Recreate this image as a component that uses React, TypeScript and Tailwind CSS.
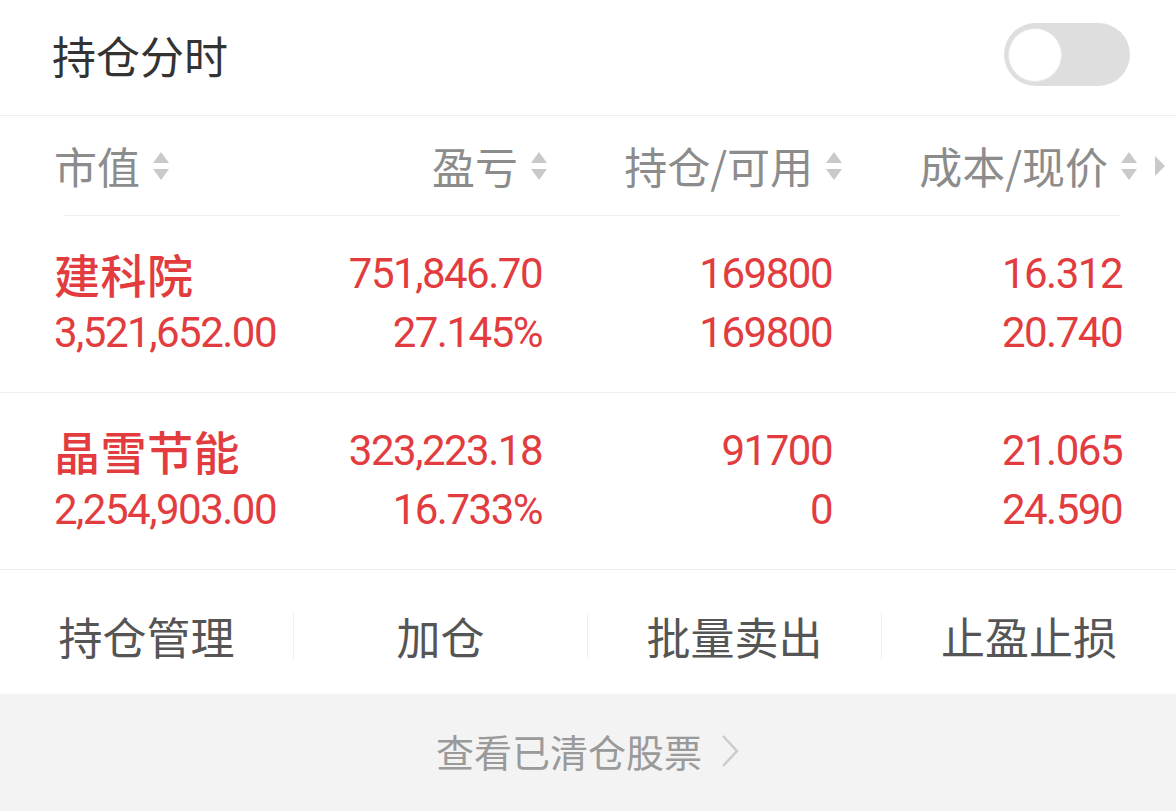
import React from 'react';

const cjk = { fontFamily: '"Noto Sans CJK SC", "Noto Sans", sans-serif' };
const num = { fontFamily: 'Roboto, "Noto Sans CJK SC", sans-serif' };

type Row = {
  name: string;
  value: string;
  pnl: string;
  pct: string;
  hold: string;
  avail: string;
  cost: string;
  price: string;
};

const rows: Row[] = [
  { name: '建科院', value: '3,521,652.00', pnl: '751,846.70', pct: '27.145%', hold: '169800', avail: '169800', cost: '16.312', price: '20.740' },
  { name: '晶雪节能', value: '2,254,903.00', pnl: '323,223.18', pct: '16.733%', hold: '91700', avail: '0', cost: '21.065', price: '24.590' },
];

function SortArrows() {
  return (
    <svg width="18" height="32" viewBox="0 0 18 32" className="ml-[12px] shrink-0">
      <path d="M9 2 L17 13 L1 13 Z" fill="#c9c9c9" />
      <path d="M1 19 L17 19 L9 30 Z" fill="#c9c9c9" />
    </svg>
  );
}

export default function App() {
  return (
    <div className="w-[1176px] h-[811px] bg-white overflow-hidden flex flex-col" style={cjk}>
      {/* title bar */}
      <div className="h-[116px] shrink-0 border-b border-[#eeeeee] flex items-center justify-between pl-[52px] pr-[46px] pb-[6px]">
        <span className="text-[44px] text-[#333333] leading-none">持仓分时</span>
        <div className="w-[126px] h-[63px] rounded-full bg-[#dedede] flex items-center pl-[4px]">
          <div className="w-[54px] h-[54px] rounded-full bg-white border border-[#e8e8e8]" />
        </div>
      </div>

      {/* column header */}
      <div className="shrink-0 flex flex-col">
        <div className="h-[99px] flex items-center pl-[54px]">
          <div className="grid grid-cols-[246px_248px_295px_295px] shrink-0 items-center text-[43px] text-[#8c8c8c]">
            <div className="flex items-center">市值<SortArrows /></div>
            <div className="flex items-center justify-end">盈亏<SortArrows /></div>
            <div className="flex items-center justify-end">持仓/可用<SortArrows /></div>
            <div className="flex items-center justify-end">成本/现价<SortArrows /></div>
          </div>
          <svg width="12" height="22" viewBox="0 0 12 22" className="ml-[16px] shrink-0">
            <path d="M1 1 L11 11 L1 21 Z" fill="#c9c9c9" />
          </svg>
        </div>
        <div className="h-px bg-[#f0f0f0] ml-[64px] mr-[56px]" />
      </div>

      {/* positions */}
      {rows.map((r) => (
        <div key={r.name} className="shrink-0 border-b border-[#eeeeee] pt-[28px] pb-[30px] pl-[54px]">
          <div className="grid grid-cols-[246px_242px_290px_290px] text-[#e23c3f] leading-[59px]">
            <div className="flex flex-col">
              <span className="text-[46px] font-medium tracking-[0.5px]">{r.name}</span>
              <span className="text-[42px] tracking-[-1.5px]" style={num}>{r.value}</span>
            </div>
            <div className="flex flex-col items-end text-[42px] tracking-[-1.5px]" style={num}>
              <span>{r.pnl}</span>
              <span>{r.pct}</span>
            </div>
            <div className="flex flex-col items-end text-[42px] tracking-[-1.5px]" style={num}>
              <span>{r.hold}</span>
              <span>{r.avail}</span>
            </div>
            <div className="flex flex-col items-end text-[42px] tracking-[-1.5px]" style={num}>
              <span>{r.cost}</span>
              <span>{r.price}</span>
            </div>
          </div>
        </div>
      ))}

      {/* actions */}
      <div className="h-[124px] shrink-0 grid grid-cols-4 items-center pt-[8px] text-[44px] text-[#555555]">
        {['持仓管理', '加仓', '批量卖出', '止盈止损'].map((t, i) => (
          <div key={t} className={`flex items-center justify-center h-[46px] ${i < 3 ? 'border-r border-[#efefef]' : ''}`}>
            {t}
          </div>
        ))}
      </div>

      {/* footer */}
      <div className="flex-1 bg-[#f4f3f3] flex items-center justify-center pb-[4px]">
        <span className="text-[38px] text-[#9a9a9a]">查看已清仓股票</span>
        <svg width="20" height="34" viewBox="0 0 20 34" className="ml-[18px]">
          <path d="M3 2 L17 17 L3 32" fill="none" stroke="#cccccc" strokeWidth="2.5" />
        </svg>
      </div>
    </div>
  );
}
